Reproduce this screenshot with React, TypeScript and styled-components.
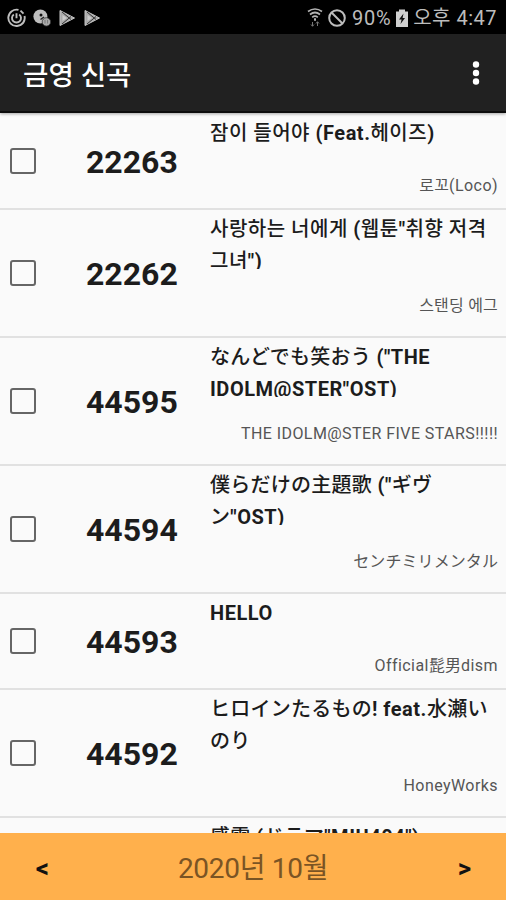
import React from 'react';
import styled, { createGlobalStyle } from 'styled-components';

const GlobalStyle = createGlobalStyle`
  * { box-sizing: border-box; }
  body {
    margin: 0;
    background: #fafafa;
    font-family: Roboto, 'Noto Sans CJK KR', sans-serif;
  }
`;

const Screen = styled.div`
  width: 506px;
  height: 900px;
  display: flex;
  flex-direction: column;
  overflow: hidden;
  background: #fafafa;
`;

const StatusBar = styled.div`
  flex: none;
  height: 34px;
  display: flex;
  align-items: center;
  justify-content: space-between;
  padding: 1px 9px 0 7px;
  background: #000;
  color: #bdbdbd;
`;

const Notifications = styled.div`
  display: flex;
  align-items: center;
  gap: 7px;
`;

const SystemInfo = styled.div`
  display: flex;
  align-items: center;
  font-size: 20px;
  line-height: 32px;
  white-space: pre;
`;

const Icon = styled.svg<{ $gap?: number }>`
  display: block;
  flex: none;
  margin-right: ${(p) => p.$gap ?? 0}px;
`;

const Percent = styled.span`
  width: 40px;
  margin-right: 4px;
  letter-spacing: 0.7px;
`;

const Clock = styled.span`
  width: 89px;
  text-align: right;
  letter-spacing: 0.5px;
`;

const AppBar = styled.header`
  flex: none;
  height: 79px;
  display: flex;
  align-items: center;
  justify-content: space-between;
  padding: 0 26px 0 23px;
  background: #212121;
  border-bottom: 2px solid #0c0c0c;
  box-shadow: 0 1px 3px rgba(0, 0, 0, 0.35);
  z-index: 1;
`;

const Heading = styled.h1`
  margin: 0;
  padding-top: 6px;
  font-size: 27.6px;
  font-weight: 500;
  line-height: 40px;
  color: #fff;
  white-space: nowrap;
`;

const List = styled.main`
  flex: 1;
  min-height: 0;
  overflow: hidden;
  padding-top: 1px;
`;

const Row = styled.div<{ $tall: boolean }>`
  display: grid;
  grid-template-columns: 66px 132px 1fr;
  height: ${(p) => (p.$tall ? 128 : 96)}px;
  padding: 0 8px 0 10px;
  border-bottom: 2px solid #e1e1e1;
`;

const Check = styled.span`
  align-self: center;
  width: 26px;
  height: 26px;
  border: 2px solid #666;
  border-radius: 3px;
`;

const SongNumber = styled.span`
  align-self: center;
  padding: 1px 0 0 10px;
  font-size: 32px;
  font-weight: 700;
  line-height: 40px;
  color: #1c1c1c;
`;

const Details = styled.div`
  display: flex;
  flex-direction: column;
  min-width: 0;
  margin-left: 2px;
`;

const Title = styled.div<{ $tall: boolean }>`
  flex: none;
  height: ${(p) => (p.$tall ? 59 : 40)}px;
  padding-top: 3px;
  overflow: hidden;
  font-size: 20px;
  font-weight: 500;
  line-height: 32px;
  color: #1c1c1c;
  white-space: pre;
`;

const TitleLine = styled.div`
  height: 32px;
`;

const Artist = styled.div<{ $tall: boolean }>`
  margin-top: auto;
  height: 24px;
  margin-bottom: ${(p) => (p.$tall ? 18 : 10)}px;
  text-align: right;
  font-size: 16px;
  line-height: 24px;
  color: #555;
  white-space: nowrap;
`;

const Korean = styled.span`
  font-family: 'Noto Sans CJK KR', sans-serif;
  line-height: 0;
  letter-spacing: 0.025em;
  ${Artist} & { letter-spacing: 0.01em; }
`;

const Japanese = styled.span`
  font-family: 'Noto Sans CJK JP', sans-serif;
  line-height: 0;
  letter-spacing: 0.012em;
  ${Artist} & { letter-spacing: 0.005em; }
`;

const Latin = styled.span`
  letter-spacing: 0.027em;
  ${Title} & {
    font-weight: 700;
    letter-spacing: 0.026em;
  }
`;

const MonthBar = styled.footer`
  flex: none;
  height: 67px;
  display: grid;
  grid-template-columns: 84px 1fr 84px;
  align-items: center;
  justify-items: center;
  background: #ffb04c;
`;

const Month = styled.span`
  padding-top: 5px;
  font-size: 28px;
  line-height: 40px;
  letter-spacing: -0.3px;
  color: #7a5424;
`;

const Step = styled.button`
  border: 0;
  padding: 3px 0 0 1px;
  background: none;
  font: 700 26px/32px Roboto, sans-serif;
  color: #111;
`;

type Song = { no: string; title: string[]; artist: string; tall?: boolean };

const songs: Song[] = [
  { no: '22263', title: ['잠이 들어야 (Feat.헤이즈)'], artist: '로꼬(Loco)' },
  { no: '22262', title: ['사랑하는 너에게 (웹툰"취향 저격', '그녀")'], artist: '스탠딩 에그', tall: true },
  { no: '44595', title: ['なんどでも笑おう ("THE', 'IDOLM@STER"OST)'], artist: 'THE IDOLM@STER FIVE STARS!!!!!', tall: true },
  { no: '44594', title: ['僕らだけの主題歌 ("ギヴ', 'ン"OST)'], artist: 'センチミリメンタル', tall: true },
  { no: '44593', title: ['HELLO'], artist: 'Official髭男dism' },
  { no: '44592', title: ['ヒロインたるもの! feat.水瀬い', 'のり'], artist: 'HoneyWorks', tall: true },
  { no: '44591', title: ['感電 (ドラマ"MIU404")'], artist: '' },
];

/** Splits a string by script so each run gets its own face and tracking. */
const Runs = ({ text }: { text: string }) => (
  <>
    {(text.match(/[\uac00-\ud7a3]+|[\u3040-\u30ff\u4e00-\u9fff]+|[^\uac00-\ud7a3\u3040-\u30ff\u4e00-\u9fff]+/g) ?? []).map((run, i) => {
      const Run = /[\uac00-\ud7a3]/.test(run) ? Korean : /[\u3040-\u30ff\u4e00-\u9fff]/.test(run) ? Japanese : Latin;
      return <Run key={i}>{run}</Run>;
    })}
  </>
);

const PlayIcon = () => (
  <Icon width="18" height="18" viewBox="0 0 18 18">
    <path d="M2 1.5 16.5 9 2 16.5Z" fill="#aaa" stroke="#c4c4c4" strokeLinejoin="round" />
    <path d="m4 3 9 7.5M4 15l9-7.5" stroke="#333" strokeWidth="1" />
    <path d="m4.5 6 4.5 3-4.5 3Z" fill="#ccc" />
  </Icon>
);

export default function App() {
  return (
    <Screen>
      <GlobalStyle />
      <StatusBar>
        <Notifications>
          <Icon width="19" height="20" viewBox="0 0 19 20" fill="none" stroke="#bdbdbd" strokeWidth="1.9">
            <path d="M11.5 1.9A8.2 8.2 0 1 0 17.5 8M17.6 11.5a8.4 8.4 0 0 1-4.2 5.6M13.5 2.7l3 3" />
            <path d="M6.8 6.4a4.5 4.5 0 1 0 5.4 0M9.5 5.2v5" />
          </Icon>
          <Icon width="18" height="18" viewBox="0 0 18 18">
            <circle cx="7.4" cy="7.5" r="7" fill="#bdbdbd" />
            <circle cx="8" cy="6" r="1.5" fill="#111" />
            <path d="M7.5 10.5 11 8" stroke="#222" strokeWidth="1.5" />
            <circle cx="13.4" cy="12.9" r="4.2" fill="#aaa" stroke="#333" strokeWidth=".8" />
            <path d="M12 11v3.5M14.6 11v3.5" stroke="#777" />
          </Icon>
          <PlayIcon />
          <PlayIcon />
        </Notifications>
        <SystemInfo>
          <Icon $gap={5} width="16" height="19" viewBox="0 0 16 19" fill="none" stroke="#b2b2b2" strokeWidth="1.7">
            <path d="M1 3.5q7-5 14 0M3 6.5q5-4 10 0M5.2 9.4q2.8-2.4 5.6 0" />
            <path d="M7 11.5h2" strokeWidth="2.5" />
            <path d="M5.5 14v4M10.5 14v4M4 16.5l1.5 1.8L7 16.5M9 15.5l1.5-1.8 1.5 1.8" stroke="#777" strokeWidth="1" />
          </Icon>
          <Icon $gap={6} width="18" height="18" viewBox="0 0 18 18" fill="none" stroke="#bdbdbd" strokeWidth="2">
            <circle cx="9" cy="9" r="7.8" />
            <path d="m3.5 3.5 11 11" />
          </Icon>
          <Percent>90%</Percent>
          <Icon width="12" height="18" viewBox="0 0 12 18">
            <path d="M0 2.5h3V.5h6v2h3V18H0Z" fill="#d0d0d0" />
            <path d="M7.5 4.5 3 10.5h2.6L4.5 15 9 9H6.6Z" fill="#111" />
          </Icon>
          <Clock>오후 4:47</Clock>
        </SystemInfo>
      </StatusBar>
      <AppBar>
        <Heading>금영 신곡</Heading>
        <Icon width="8" height="24" viewBox="0 0 8 24" fill="#fff">
          <circle cx="4" cy="3.5" r="3.2" />
          <circle cx="4" cy="12" r="3.2" />
          <circle cx="4" cy="20.5" r="3.2" />
        </Icon>
      </AppBar>
      <List>
        {songs.map((s) => (
          <Row key={s.no} $tall={!!s.tall}>
            <Check />
            <SongNumber>{s.no}</SongNumber>
            <Details>
              <Title $tall={!!s.tall}>
                {s.title.map((line) => (
                  <TitleLine key={line}><Runs text={line} /></TitleLine>
                ))}
              </Title>
              <Artist $tall={!!s.tall}><Runs text={s.artist} /></Artist>
            </Details>
          </Row>
        ))}
      </List>
      <MonthBar>
        <Step>&lt;</Step>
        <Month>2020년 10월</Month>
        <Step>&gt;</Step>
      </MonthBar>
    </Screen>
  );
}
